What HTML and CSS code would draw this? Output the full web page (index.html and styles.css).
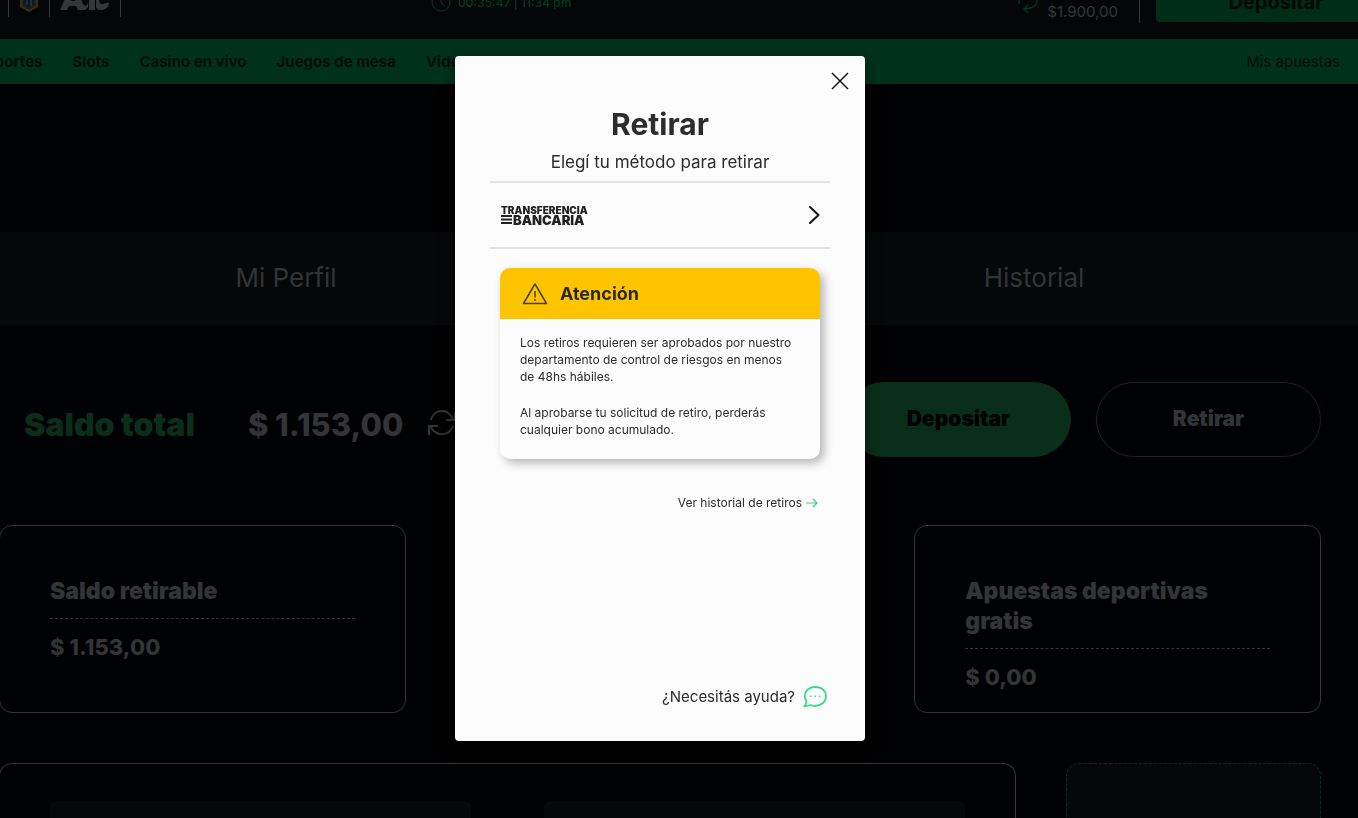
FILE: index.html
```html
<!DOCTYPE html>
<html lang="es">
<head>
<meta charset="utf-8">
<meta name="viewport" content="width=device-width, initial-scale=1">
<title>Retirar</title>
<link rel="stylesheet" href="styles.css">
</head>
<body>
<header class="topbar">
  <div class="brands">
    <span class="rule"></span>
    <svg class="crest" viewBox="0 0 20 28" aria-hidden="true"><path d="M1 1h18v21l-9 5-9-5z" fill="#3a2d08"/><path d="M3 3h14v18l-7 4-7-4z" fill="#1d2020"/><path d="M6 3v15l3 3M10 8v15M14 9v11M4 18l12-6" stroke="#06182c" stroke-width="2" fill="none"/><path d="M8 10v10M12 9v12" stroke="#3a3b3c" stroke-width="1"/></svg>
    <span class="rule"></span>
    <svg class="aclogo" viewBox="0 0 50 26" aria-hidden="true"><path d="M0 24 9 4h9l7 20h-7l-2-4H9l-2 4zM11 15h4l-2-5zM20 18h3l3 2 2-3c1 4-1 7-4 7zM29 4h6v20h-6zM36 4c7-1 10 4 11 8l-4 2c-3-4-5-1-3 3 3 3 5-1 9 0 0 4-4 7-8 7-3 0-5-1-5-3z" fill="#353637"/></svg>
    <span class="rule"></span>
  </div>
  <div class="clock">
    <svg width="20" height="20" viewBox="0 0 20 20" fill="none" stroke="currentColor" stroke-width="1" aria-hidden="true"><circle cx="10" cy="10" r="9"/><path d="M10 4v6l4 5"/></svg>
    <span>00:35:47 | 11:34 pm</span>
  </div>
  <div class="account">
    <svg width="22" height="30" viewBox="0 0 22 30" fill="none" stroke="currentColor" stroke-width="1.300" aria-hidden="true"><path d="M2 20v-6c0-8 8-8 12-8l-4-4m4 4-4 4M20 10v6c0 7-7 9-13 9l4-4m-4 4 4 4"/></svg>
    <span class="amount">$1.900,00</span>
    <span class="rule tall"></span>
    <button class="deposit-top" type="button">Depositar</button>
  </div>
</header>
<nav class="mainnav">
  <div class="links">
    <a href="#">Deportes</a><a href="#">Slots</a><a href="#">Casino en vivo</a><a href="#">Juegos de mesa</a><a href="#">Video</a>
  </div>
  <a class="bets" href="#">Mis apuestas</a>
</nav>
<nav class="tabs">
  <a href="#">Mi Perfil</a><a class="last" href="#">Historial</a>
</nav>
<main class="content">
  <section class="balance">
    <div class="total">
      <h2>Saldo total</h2>
      <strong>$ 1.153,00</strong>
      <button class="refresh" type="button" aria-label="Actualizar saldo"><svg width="30" height="28" viewBox="0 0 30 28" fill="none" stroke="currentColor" stroke-width="2" aria-hidden="true"><path d="M4 11C7-1 22-1 26 11m2-8v8h-9M26 17C22 28 9 28 3 17m-1 9v-9h9"/></svg></button>
    </div>
    <div class="actions">
      <button class="pill filled" type="button">Depositar</button>
      <button class="pill" type="button">Retirar</button>
    </div>
  </section>
  <section class="cards">
    <article class="card"><h3>Saldo retirable</h3><p>$ 1.153,00</p></article>
    <article class="card last"><h3>Apuestas deportivas gratis</h3><p>$ 0,00</p></article>
  </section>
  <section class="panels">
    <div class="panel"><div class="block"></div><div class="block"></div></div>
    <div class="aside"></div>
  </section>
</main>
<div class="overlay">
  <section class="modal" role="dialog" aria-modal="true" aria-labelledby="modal-title">
    <button class="close" type="button" aria-label="Cerrar"><svg width="18" height="18" viewBox="0 0 18 18" fill="none" stroke="currentColor" stroke-width="1.500" aria-hidden="true"><path d="M1 1l16 16M17 1 1 17"/></svg></button>
    <h1 id="modal-title">Retirar</h1>
    <p class="subtitle">Elegí tu método para retirar</p>
    <button class="method" type="button">
      <span class="transfer"><span class="small">TRANSFERENCIA</span><span class="large"><svg width="11" height="9" viewBox="0 0 11 9" aria-hidden="true"><path d="M0 0h11v2H0zM0 3.500h11v2H0zM0 7h11v2H0z" fill="#222"/></svg>BANCARIA</span></span>
      <svg width="12" height="20" viewBox="0 0 12 20" fill="none" stroke="#151515" stroke-width="2" stroke-linecap="round" stroke-linejoin="round" aria-hidden="true"><path d="m2 2 8.500 8L2 18"/></svg>
    </button>
    <div class="notice">
      <h2><svg width="26" height="23" viewBox="0 0 26 23" fill="none" stroke="#4a3e12" stroke-width="1.500" stroke-linejoin="round" aria-hidden="true"><path d="M13 2 24.500 21.500H1.500zM13 9v6.500M13 17v2"/></svg>Atención</h2>
      <div class="notice-text">
        <p>Los retiros requieren ser aprobados por nuestro departamento de control de riesgos en menos de 48hs hábiles.</p>
        <p>Al aprobarse tu solicitud de retiro, perderás cualquier bono acumulado.</p>
      </div>
    </div>
    <a class="history" href="#">Ver historial de retiros <svg width="12" height="10" viewBox="0 0 12 10" fill="none" stroke="#4dca88" stroke-width="1.200" aria-hidden="true"><path d="M0 5h11M7 1l4 4-4 4"/></svg></a>
    <a class="help" href="#">¿Necesitás ayuda? <svg width="24" height="22" viewBox="0 0 24 22" aria-hidden="true"><path d="M3.500 15.500C-1 8 4 1 12.500 1 19 1 23 5 23 10.500S18 20 12 20c-2 0-3-.3-4.500-1-2 1-4 1.200-6 1 1.200-1.300 2-2.800 2-4.500z" fill="none" stroke="#37dc89" stroke-width="1.800"/><path d="M7 9.500h1.500v1.500H7zM11.500 9.500H13V11h-1.500zM16 9.500h1.500V11H16z" fill="#37dc89"/></svg></a>
  </section>
</div>
</body>
</html>
```
FILE: styles.css
```css
* { box-sizing: border-box; }
html, body { height: 100%; overflow: hidden; }
body { display: flex; flex-direction: column; margin: 0; background: #000102; color: #333435; font-family: Inter, "Liberation Sans", sans-serif; }
h1, h2, h3, p { margin: 0; }
a { color: inherit; text-decoration: none; }
button { padding: 0; border: 0; background: none; color: inherit; font: inherit; }
svg { flex: none; }

.topbar { display: flex; flex: none; align-items: center; justify-content: space-between; height: 80px; margin-top: -41px; background: #040608; }
.brands { display: flex; align-items: center; gap: 10px; padding-left: 8px; }
.rule { width: 1px; height: 36px; background: #353637; }
.rule.tall { height: 48px; }
.crest { width: 20px; height: 28px; }
.aclogo { width: 50px; height: 26px; }
.clock { display: flex; align-items: center; gap: 7px; margin-right: 136px; padding-top: 6px; color: #003c20; font-size: 12px; font-weight: 500; }
.account { display: flex; align-items: center; color: #00381e; }
.amount { margin: 0 21px 0 8px; padding-top: 26px; color: #353637; font-size: 15px; line-height: 18px; }
.deposit-top { width: 240px; height: 46px; padding-top: 6px; margin: 0 -38px 0 16px; border-radius: 4px; background: #002d18; color: #030805; font-size: 20px; font-weight: 700; }

.mainnav { display: flex; flex: none; align-items: center; justify-content: space-between; height: 45px; padding-right: 18px; background: #00321b; color: #040d08; font-size: 15px; }
.links { display: flex; gap: 30px; margin-left: -25px; font-weight: 700; }
.tabs { display: grid; flex: none; grid-template-columns: repeat(3, 1fr); align-items: center; height: 93px; margin-top: 148px; padding: 0 137px 2px 99px; background: #060708; font-size: 26px; text-align: center; }
.last { grid-column: 3; }

.content { display: flex; flex: 1; flex-direction: column; min-height: 0; margin-left: -1px; padding: 57px 37px 0 0; }
.balance { display: flex; justify-content: space-between; height: 75px; padding-left: 25px; font-weight: 900; }
.total { display: flex; align-items: center; padding-top: 10px; }
.total h2 { margin-right: 53px; color: #0a2e1c; font-size: 32px; font-weight: 900; }
.total strong { font-size: 31px; font-weight: 800; }
.refresh { display: flex; margin-left: 24px; padding-bottom: 4px; }
.actions { display: flex; gap: 25px; }
.pill { width: 225px; height: 75px; padding-bottom: 3px; border: 1px solid #0a2e1c; border-radius: 38px; font-size: 21px; font-weight: 900; }
.pill.filled { background: #0a2e1c; color: #000102; }
.cards { display: grid; grid-template-columns: repeat(3, 1fr); gap: 51px; margin-top: 68px; }
.card { min-height: 188px; padding: 50px 50px 20px; border: 1px solid #343536; border-radius: 13px; font-size: 22px; line-height: 30px; font-weight: 800; }
.card h3 { padding-bottom: 12px; border-bottom: 1px dashed #343536; font-size: 23px; font-weight: 900; }
.card p { padding-top: 13px; }
.panels { display: grid; flex: 1; grid-template-columns: 1fr 255px; gap: 50px; min-height: 0; margin-top: 50px; }
.panel { display: grid; grid-template-columns: 1fr 1fr; gap: 73px; padding: 37px 50px 0; border: 1px solid #343536; border-bottom: 0; border-radius: 13px 13px 0 0; }
.block { border-radius: 6px 6px 0 0; background: #060708; }
.aside { border: 1px dashed #0a2e1c; border-bottom: 0; border-radius: 13px 13px 0 0; background: #060708; }

.overlay { position: fixed; inset: 0; display: flex; align-items: flex-start; justify-content: center; padding: 56px 38px 0 0; }
.modal { position: relative; display: flex; flex-direction: column; width: 410px; min-height: 685px; padding: 48px 35px 32px; border-radius: 4px; background: #fcfcfc; color: #2c2c2c; box-shadow: 0 5px 15px #00000080; }
.close { position: absolute; top: 16px; right: 16px; display: flex; color: #111; }
.modal h1 { font-size: 30px; line-height: 40px; text-align: center; }
.subtitle { margin-top: 8px; font-size: 17px; line-height: 20px; text-align: center; }
.method { display: flex; align-items: center; justify-content: space-between; height: 68px; margin-top: 9px; padding: 0 10px 0 11px; border: solid #e3e3e3; border-width: 2px 0; }
.transfer { display: flex; flex-direction: column; color: #222; text-align: left; font-weight: 900; }
.small { font-size: 10px; line-height: 9px; }
.large { display: flex; align-items: center; gap: 1px; font-size: 13px; line-height: 10px; }
.notice { margin: 19px 10px 0; border-radius: 10px; box-shadow: 4px 4px 10px #00000048; overflow: hidden; }
.notice h2 { display: flex; align-items: center; gap: 12px; height: 51px; padding-left: 22px; background: #ffc400; color: #292722; font-size: 18px; }
.notice-text { display: grid; gap: 19px; padding: 15px 22px 21px 20px; font-size: 12px; line-height: 17px; }
.history { display: flex; align-items: center; gap: 4px; align-self: flex-end; margin: 35px 12px 0 0; font-size: 12px; line-height: 17px; }
.help { display: flex; align-items: center; gap: 8px; align-self: flex-end; margin: auto 3px 0 0; font-size: 15px; line-height: 24px; }
```
